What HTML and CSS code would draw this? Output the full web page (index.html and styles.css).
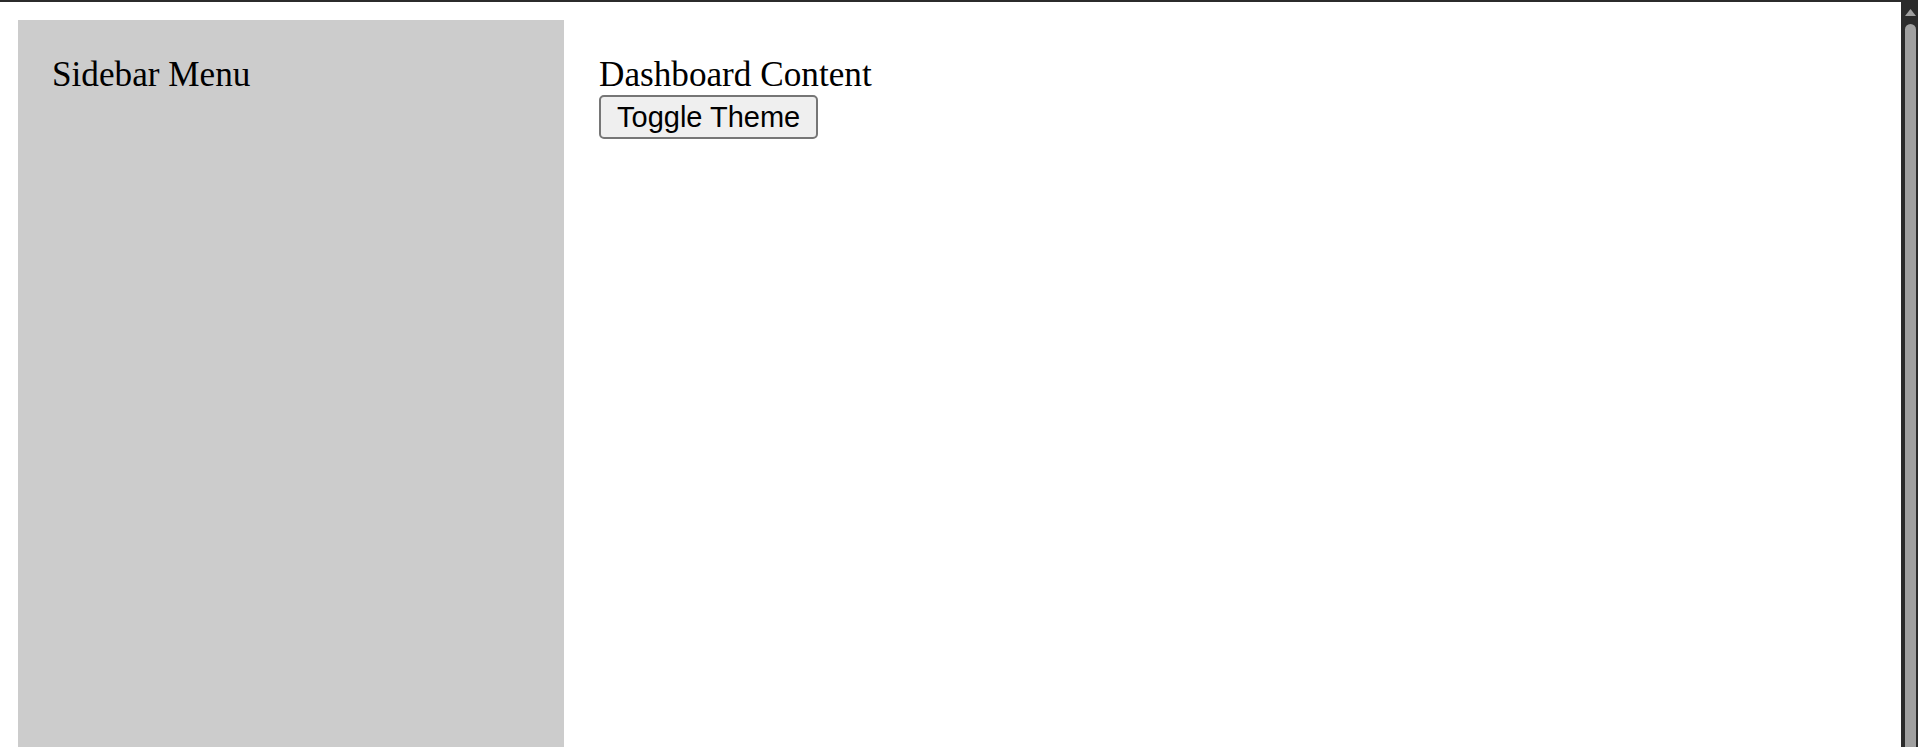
FILE: index.html
```html
<!DOCTYPE html>
<html lang="en">
<head>
<meta charset="utf-8">
<title>Dashboard</title>
<link rel="stylesheet" href="styles.css">
</head>
<body>
<div class="window">
  <div class="topbar"></div>
  <div class="viewport">
    <div class="page">
      <div class="layout">
        <aside class="sidebar">
          <div class="sidebar-title">Sidebar Menu</div>
        </aside>
        <main class="main">
          <div class="main-title">Dashboard Content</div>
          <button class="toggle" type="button">Toggle Theme</button>
        </main>
      </div>
    </div>
    <div class="scrollbar">
      <svg class="scroll-arrow" width="11" height="7" viewBox="0 0 11 7"><polygon points="5.5,0 11,7 0,7" fill="#a0a0a0"/></svg>
      <div class="scroll-thumb"></div>
    </div>
  </div>
</div>
</body>
</html>
```

FILE: styles.css
```css
html, body {
  margin: 0;
  padding: 0;
  height: 100%;
  overflow: hidden;
  background: #ffffff;
}

.window {
  display: flex;
  flex-direction: column;
  height: 100vh;
}

.topbar {
  height: 2px;
  flex: none;
  background: #2b2b2b;
}

.viewport {
  flex: 1;
  display: flex;
  flex-direction: row;
  overflow: hidden;
  min-height: 0;
}

.page {
  flex: 1;
  padding: 18px 0 0 18px;
  font-family: "Liberation Serif", "Times New Roman", serif;
  color: #000;
}

.layout {
  display: flex;
  flex-direction: row;
}

.sidebar {
  width: 546px;
  min-height: 900px;
  box-sizing: border-box;
  background: #cccccc;
  padding: 35px 34px;
  flex: none;
}

.sidebar-title,
.main-title {
  font-size: 35.2px;
  line-height: normal;
}

.main {
  flex: 1;
  padding: 35px 35px;
  display: flex;
  flex-direction: column;
  align-items: flex-start;
}

.toggle {
  margin-top: 0;
  height: 44px;
  box-sizing: border-box;
  padding: 3px 16px;
  font-family: "Liberation Sans", Arial, sans-serif;
  font-size: 29px;
  line-height: normal;
  color: #000;
  background: #efefef;
  border: 2px solid #767676;
  border-radius: 5px;
}

.scrollbar {
  width: 17px;
  flex: none;
  background: #2b2b2b;
  display: flex;
  flex-direction: column;
  align-items: flex-start;
  padding: 7px 0 0 4px;
  box-sizing: border-box;
}

.scroll-arrow {
  display: block;
  flex: none;
}

.scroll-thumb {
  margin-top: 8px;
  width: 11px;
  flex: 1;
  background: #a0a0a0;
  border-radius: 6px 6px 0 0;
}
```
